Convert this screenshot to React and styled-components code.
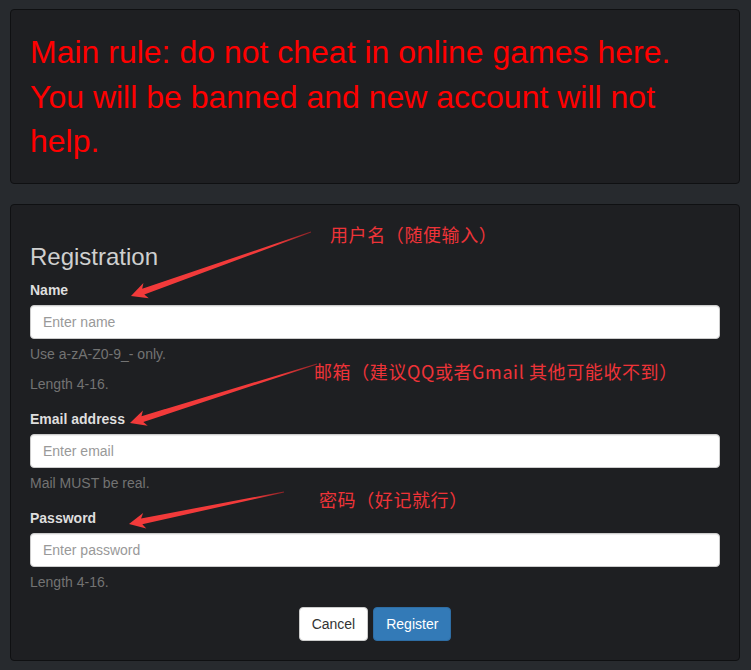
import React from 'react';
import styled, { createGlobalStyle } from 'styled-components';

const GlobalStyle = createGlobalStyle`
  body {
    margin: 0;
    background-color: #272a2e;
    font-family: "Liberation Sans", Arial, sans-serif;
    font-size: 14px;
    line-height: 20px;
  }
  * {
    box-sizing: border-box;
  }
`;

// annotation arrows, page coords (tail -> tip)
const arrows = [
  { tail: [311, 232], tip: [131, 296] },
  { tail: [317, 364], tip: [130, 423] },
  { tail: [284, 492], tip: [129, 524] },
];

const notes = [
  { text: '用户名（随便输入）', x: 330, y: 225 },
  { text: '邮箱（建议QQ或者Gmail 其他可能收不到）', x: 314, y: 362 },
  { text: '密码（好记就行）', x: 319, y: 490 },
];

function arrowPoints(tail, tip) {
  const dx = tail[0] - tip[0];
  const dy = tail[1] - tip[1];
  const len = Math.sqrt(dx * dx + dy * dy);
  const ux = dx / len;
  const uy = dy / len;
  const nx = -uy;
  const ny = ux;
  const headLen = 16;
  const headHalf = 8;
  const shaftHalf = 3;
  const bx = tip[0] + ux * headLen;
  const by = tip[1] + uy * headLen;
  const ix = tip[0] + ux * (headLen - 3);
  const iy = tip[1] + uy * (headLen - 3);
  const pts = [
    [tail[0] + nx * 0.4, tail[1] + ny * 0.4],
    [ix + nx * shaftHalf, iy + ny * shaftHalf],
    [bx + nx * headHalf, by + ny * headHalf],
    tip,
    [bx - nx * headHalf, by - ny * headHalf],
    [ix - nx * shaftHalf, iy - ny * shaftHalf],
    [tail[0] - nx * 0.4, tail[1] - ny * 0.4],
  ];
  return pts.map((p) => p[0].toFixed(1) + ',' + p[1].toFixed(1)).join(' ');
}

function App() {
  return (
    <Page>
      <GlobalStyle />
      <Panel>
        <RuleText>
          Main rule: do not cheat in online games here. You will be banned and new account will not help.
        </RuleText>
      </Panel>

      <Panel>
        <Heading>Registration</Heading>
        <FormGroup>
          <Label>Name</Label>
          <Input type="text" placeholder="Enter name" />
          <Help>Use a-zA-Z0-9_- only.</Help>
          <Help>Length 4-16.</Help>
        </FormGroup>
        <FormGroup>
          <Label>Email address</Label>
          <Input type="email" placeholder="Enter email" />
          <Help>Mail MUST be real.</Help>
        </FormGroup>
        <FormGroup>
          <Label>Password</Label>
          <Input type="password" placeholder="Enter password" />
          <Help>Length 4-16.</Help>
        </FormGroup>
        <Actions>
          <Button>Cancel</Button>
          <Button primary>Register</Button>
        </Actions>
      </Panel>

      <Overlay width="751" height="670" viewBox="0 0 751 670">
        <defs>
          <linearGradient id="fade" x1="0" y1="0" x2="1" y2="0">
            <stop offset="0" stopColor="#f23a3a" />
            <stop offset="0.8" stopColor="#f23a3a" />
            <stop offset="1" stopColor="#8a2226" />
          </linearGradient>
        </defs>
        {arrows.map((a, i) => (
          <polygon key={i} points={arrowPoints(a.tail, a.tip)} fill="url(#fade)" />
        ))}
      </Overlay>

      {notes.map((n) => (
        <Note key={n.text} style={{ left: n.x, top: n.y }}>
          {n.text}
        </Note>
      ))}
    </Page>
  );
}

const Page = styled.div`
  position: relative;
  padding: 9px 11px 10px 10px;
  min-height: 670px;
`;

const Panel = styled.div`
  background-color: #1e1f22;
  border: 1px solid #0f1012;
  border-radius: 4px;
  padding: 19px;
  margin-bottom: 20px;
`;

const RuleText = styled.p`
  margin: 1px 0 0;
  color: #ff0000;
  font-size: 32px;
  line-height: 44.5px;
`;

const Heading = styled.h3`
  margin: 20px 0 10px;
  font-size: 24px;
  font-weight: 500;
  line-height: 1.1;
  color: #cfcfcf;
`;

const FormGroup = styled.div`
  margin-bottom: 15px;
`;

const Label = styled.label`
  display: block;
  margin-bottom: 5px;
  font-weight: bold;
  color: #dedede;
`;

const Input = styled.input`
  display: block;
  width: 100%;
  height: 34px;
  padding: 6px 12px;
  font-family: inherit;
  font-size: 14px;
  line-height: 20px;
  color: #555;
  background-color: #fff;
  border: 1px solid #ccc;
  border-radius: 4px;
  box-shadow: inset 0 1px 1px rgba(0, 0, 0, 0.075);
  outline: none;

  &::placeholder {
    color: #999;
  }
`;

const Help = styled.span`
  display: block;
  margin: 5px 0 10px;
  color: #737373;
`;

const Actions = styled.div`
  display: flex;
  justify-content: center;
  gap: 5px;
`;

const Button = styled.button`
  height: 34px;
  padding: 6px 12px;
  font-family: inherit;
  font-size: 14px;
  line-height: 20px;
  border-radius: 4px;
  border: 1px solid ${(p) => (p.primary ? '#2e6da4' : '#ccc')};
  background-color: ${(p) => (p.primary ? '#337ab7' : '#fff')};
  color: ${(p) => (p.primary ? '#fff' : '#333')};
`;

const Overlay = styled.svg`
  position: absolute;
  top: 0;
  left: 0;
  pointer-events: none;
`;

const Note = styled.span`
  position: absolute;
  font-family: "Noto Sans CJK SC", "Liberation Sans", sans-serif;
  font-size: 18px;
  line-height: 18px;
  letter-spacing: 0.6px;
  color: #ee3338;
  white-space: nowrap;
`;

export default App;
